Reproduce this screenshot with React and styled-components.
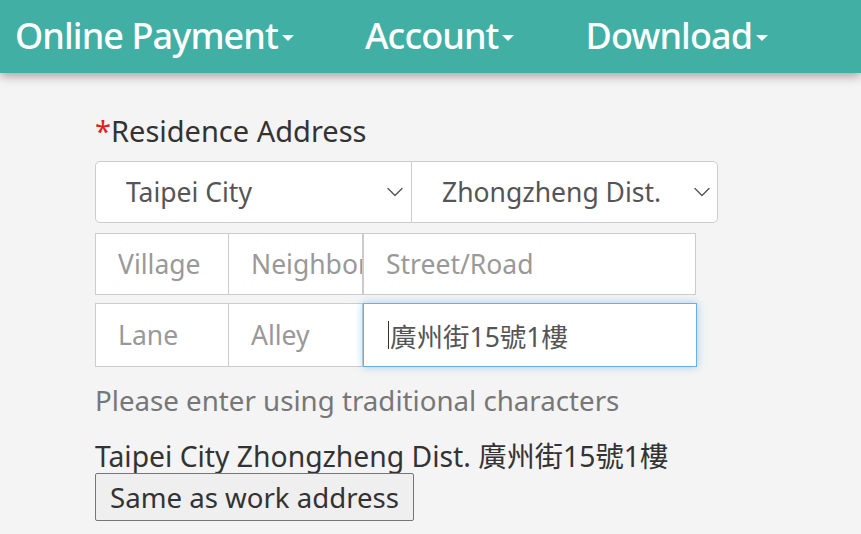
import React from 'react';
import styled, { createGlobalStyle } from 'styled-components';
import { ChevronDown } from 'lucide-react';

const GlobalStyle = createGlobalStyle`
  html, body {
    margin: 0;
    padding: 0;
    background: #f4f4f4;
  }
  body {
    font-family: 'Noto Sans', 'Noto Sans CJK TC', sans-serif;
    color: #333;
    overflow: hidden;
  }
`;

const Header = styled.header`
  height: 73px;
  background: #42afa5;
  display: flex;
  align-items: center;
  gap: 71px;
  padding: 0 15px;
  box-shadow: 0 3px 10px rgba(0, 0, 0, 0.35);
  position: relative;
  z-index: 1;
`;

const NavItem = styled.div`
  display: flex;
  align-items: center;
  color: #fff;
  font-size: 36px;
  font-weight: 500;
  letter-spacing: -0.9px;
  line-height: 1;
  padding-bottom: 2px;

  &::after {
    content: '';
    margin-left: 4px;
    margin-top: 4px;
    border-left: 6px solid transparent;
    border-right: 6px solid transparent;
    border-top: 6px solid #fff;
  }
`;

const Main = styled.main`
  padding: 38px 0 0 95px;
  display: flex;
  flex-direction: column;
`;

const Label = styled.div`
  font-size: 29px;
  line-height: 40px;
  color: #333;
  margin-bottom: 10px;
`;

const Required = styled.span`
  color: #e02020;
`;

const SelectRow = styled.div`
  display: grid;
  grid-template-columns: 317px 307px;
  height: 62px;
`;

const SelectBox = styled.div`
  position: relative;
  display: flex;
`;

const Select = styled.select`
  appearance: none;
  box-sizing: border-box;
  width: 100%;
  height: 100%;
  margin: 0;
  border: 1px solid #ccc;
  border-radius: ${({ $first }) => ($first ? '5px 0 0 5px' : '0 5px 5px 0')};
  margin-left: ${({ $first }) => ($first ? '0' : '-1px')};
  background: #fff;
  font-family: inherit;
  font-size: 26.5px;
  color: #555;
  padding: 0 30px;
  outline: none;
`;

const Chevron = styled(ChevronDown)`
  position: absolute;
  right: 3px;
  top: 50%;
  transform: translateY(-50%);
  color: #555;
  pointer-events: none;
`;

const InputRow = styled.div`
  display: grid;
  grid-template-columns: 134px 135px 333px;
  width: 602px;
  height: ${({ $h }) => $h}px;
  margin-top: ${({ $gap }) => $gap}px;
`;

const Input = styled.input`
  box-sizing: border-box;
  width: 100%;
  height: 100%;
  margin: 0;
  border: 1px solid #ccc;
  margin-left: ${({ $first }) => ($first ? '0' : '-1px')};
  background: #fff;
  font-family: inherit;
  font-size: 26.5px;
  color: #555;
  padding: 0 0 0 22px;
  outline: none;

  &::placeholder {
    color: #999;
  }
`;

const FocusedField = styled.div`
  box-sizing: border-box;
  height: 100%;
  margin-left: -1px;
  border: 1px solid #66afe9;
  background: #fff;
  box-shadow: 0 0 8px rgba(102, 175, 233, 0.6);
  display: flex;
  align-items: center;
  padding-left: 24px;
  font-size: 26.5px;
  color: #555;
  position: relative;
  z-index: 1;
`;

const Caret = styled.span`
  width: 1px;
  height: 28px;
  background: #333;
  margin-right: 1px;
`;

const Help = styled.div`
  margin-top: 14px;
  font-size: 27.7px;
  line-height: 38px;
  color: #777;
`;

const Summary = styled.div`
  margin-top: 20px;
  font-size: 28.3px;
  line-height: 34px;
  color: #333;
`;

const Button = styled.button`
  align-self: flex-start;
  margin-top: 0;
  height: 48px;
  padding: 0 14px;
  font-family: inherit;
  font-size: 27.6px;
  color: #333;
  background: #efefef;
  border: 1px solid #767676;
  border-radius: 2px;
`;

export default function App() {
  return (
    <>
      <GlobalStyle />
      <Header>
        <NavItem>Online Payment</NavItem>
        <NavItem>Account</NavItem>
        <NavItem>Download</NavItem>
      </Header>
      <Main>
        <Label>
          <Required>*</Required>Residence Address
        </Label>
        <SelectRow>
          <SelectBox>
            <Select $first defaultValue="tp">
              <option value="tp">Taipei City</option>
            </Select>
            <Chevron size={28} strokeWidth={1.2} />
          </SelectBox>
          <SelectBox>
            <Select defaultValue="zz">
              <option value="zz">Zhongzheng Dist.</option>
            </Select>
            <Chevron size={28} strokeWidth={1.2} />
          </SelectBox>
        </SelectRow>
        <InputRow $gap={10} $h={62}>
          <Input $first placeholder="Village" />
          <Input placeholder="Neighborhood" />
          <Input placeholder="Street/Road" />
        </InputRow>
        <InputRow $gap={8} $h={64}>
          <Input $first placeholder="Lane" />
          <Input placeholder="Alley" />
          <FocusedField>
            <Caret />
            廣州街15號1樓
          </FocusedField>
        </InputRow>
        <Help>Please enter using traditional characters</Help>
        <Summary>Taipei City Zhongzheng Dist. 廣州街15號1樓</Summary>
        <Button>Same as work address</Button>
      </Main>
    </>
  );
}
